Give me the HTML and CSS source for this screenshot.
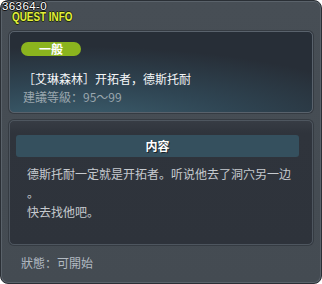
FILE: index.html
```html
<!DOCTYPE html>
<html>
<head>
<meta charset="utf-8">
<link rel="stylesheet" href="styles.css">
</head>
<body>
<div class="window">
  <div class="titlebar">
    <span class="qid">36364-0</span>
    <span class="qtitle">QUEST INFO</span>
  </div>
  <div class="card summary">
    <span class="badge">一般</span>
    <div class="name">［艾琳森林］开拓者，德斯托耐</div>
    <div class="level">建議等級：95～99</div>
  </div>
  <div class="card content">
    <div class="section-head">内容</div>
    <div class="desc">
      <p>德斯托耐一定就是开拓者。听说他去了洞穴另一边。</p>
      <p>快去找他吧。</p>
    </div>
  </div>
  <div class="status">狀態：可開始</div>
</div>
</body>
</html>
```
FILE: styles.css
```css
html, body {
  margin: 0;
  padding: 0;
  background: #ffffff;
}
body {
  font-family: "Noto Sans CJK SC", "Noto Sans", sans-serif;
  font-size: 12px;
}
.window {
  box-sizing: border-box;
  width: 322px;
  height: 284px;
  border: 1px solid #2a2f35;
  border-radius: 8px;
  background: linear-gradient(#474e55, #444b52);
  box-shadow: inset 0 0 0 1px #5a626a;
  padding: 0 8px;
  display: flex;
  flex-direction: column;
}
.titlebar {
  height: 30px;
  margin: 0 -8px;
  display: flex;
  flex-direction: column;
  align-items: flex-start;
}
.qid {
  font-family: "Liberation Sans", sans-serif;
  font-size: 11.5px;
  line-height: 11px;
  height: 11px;
  letter-spacing: 0.4px;
  color: #ffffff;
  padding-left: 1px;
  text-shadow: 1px 0 0 #111, -1px 0 0 #111, 0 1px 0 #111, 0 -1px 0 #111;
}
.qtitle {
  font-family: "Liberation Sans", sans-serif;
  font-weight: bold;
  font-size: 13px;
  line-height: 10px;
  height: 10px;
  color: #e4f03a;
  margin-left: 11px;
  display: inline-block;
  transform: scaleX(0.76);
  transform-origin: left center;
  text-shadow: 1px 0 0 #1e2a10, -1px 0 0 #1e2a10, 0 1px 0 #1e2a10, 0 -1px 0 #1e2a10;
}
.card {
  box-sizing: border-box;
  border: 1px solid #59626c;
  border-radius: 5px;
}
.summary {
  height: 82px;
  padding: 10px 13px 0;
  background: radial-gradient(ellipse 130% 120% at 20% 120%, #3e6272 0%, #2f4553 45%, #272e37 85%);
  box-shadow: 0 0 0 1px #353b42;
}
.badge {
  display: block;
  width: 60px;
  height: 14px;
  margin-left: -2px;
  border-radius: 7px;
  background: #8bb41e;
  color: #ffffff;
  font-weight: bold;
  font-size: 12px;
  line-height: 14px;
  text-align: center;
}
.name {
  margin-top: 15px;
  line-height: 16px;
  color: #f4f6f8;
}
.level {
  margin-top: 2px;
  line-height: 16px;
  color: #9aa6ae;
}
.content {
  margin-top: 7px;
  height: 125px;
  background: linear-gradient(#373c44, #2f343c 12px, #2e333b);
  border-color: #4e565f;
  box-shadow: 0 0 0 1px #353b42;
}
.section-head {
  margin: 14px 13px 0 6px;
  height: 22px;
  border-radius: 3px;
  background: #35505e;
  color: #ffffff;
  font-weight: bold;
  line-height: 22px;
  text-align: center;
  text-shadow: 1px 1px 0 #1a2228;
}
.desc {
  margin: 7px 0 0 17px;
  width: 270px;
  color: #c6cacf;
  line-height: 19px;
  line-break: anywhere;
}
.desc p {
  margin: 0;
}
.status {
  margin: 10px 0 0 12px;
  line-height: 16px;
  color: #b2bac2;
}
```
